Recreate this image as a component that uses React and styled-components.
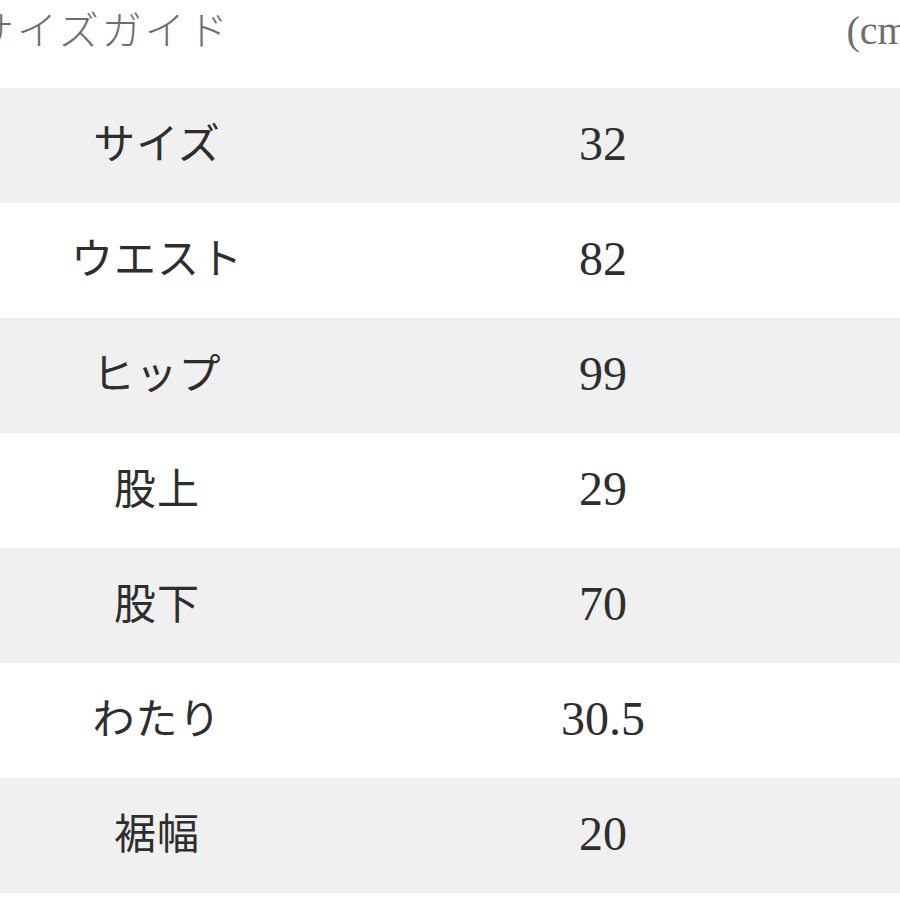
import React from 'react';
import styled, { createGlobalStyle } from 'styled-components';

const GlobalStyle = createGlobalStyle`
  html, body {
    margin: 0;
    padding: 0;
    background: #ffffff;
    overflow: hidden;
  }
`;

const Page = styled.div`
  width: 900px;
  height: 900px;
  overflow: hidden;
  background: #ffffff;
`;

const Header = styled.div`
  display: flex;
  justify-content: space-between;
  align-items: flex-start;
  height: 88px;
  white-space: nowrap;
`;

const Title = styled.h2`
  margin: 2px 0 0 -26px;
  font-family: 'Noto Sans CJK JP', sans-serif;
  font-weight: 300;
  font-size: 40px;
  letter-spacing: 3px;
  line-height: 52px;
  color: #6e6e6e;
`;

const Unit = styled.span`
  margin: 6px -22px 0 0;
  font-family: 'Liberation Serif', serif;
  font-size: 40px;
  line-height: 50px;
  color: #6e6e6e;
`;

const Table = styled.div`
  display: flex;
  flex-direction: column;
`;

const Row = styled.div`
  display: grid;
  grid-template-columns: 314px 578px 1fr;
  align-items: center;
  height: 115px;
  background: ${({ $shaded }) => ($shaded ? '#f0f0f0' : '#ffffff')};
`;

const Label = styled.div`
  text-align: center;
  font-family: 'Noto Sans CJK JP', sans-serif;
  font-size: 42px;
  color: #2e2e2e;
  letter-spacing: 1px;
  margin-top: -10px;
`;

const Value = styled.div`
  text-align: center;
  font-family: 'Liberation Serif', serif;
  font-size: 48px;
  color: #2e2e2e;
  margin-top: -4px;
`;

const rows = [
  ['サイズ', '32'],
  ['ウエスト', '82'],
  ['ヒップ', '99'],
  ['股上', '29'],
  ['股下', '70'],
  ['わたり', '30.5'],
  ['裾幅', '20'],
];

const App = () => (
  <>
    <GlobalStyle />
    <Page>
      <Header>
        <Title>サイズガイド</Title>
        <Unit>(cm)</Unit>
      </Header>
      <Table>
        {rows.map(([label, value], i) => (
          <Row key={label} $shaded={i % 2 === 0}>
            <Label>{label}</Label>
            <Value>{value}</Value>
            <div />
          </Row>
        ))}
      </Table>
    </Page>
  </>
);

export default App;
